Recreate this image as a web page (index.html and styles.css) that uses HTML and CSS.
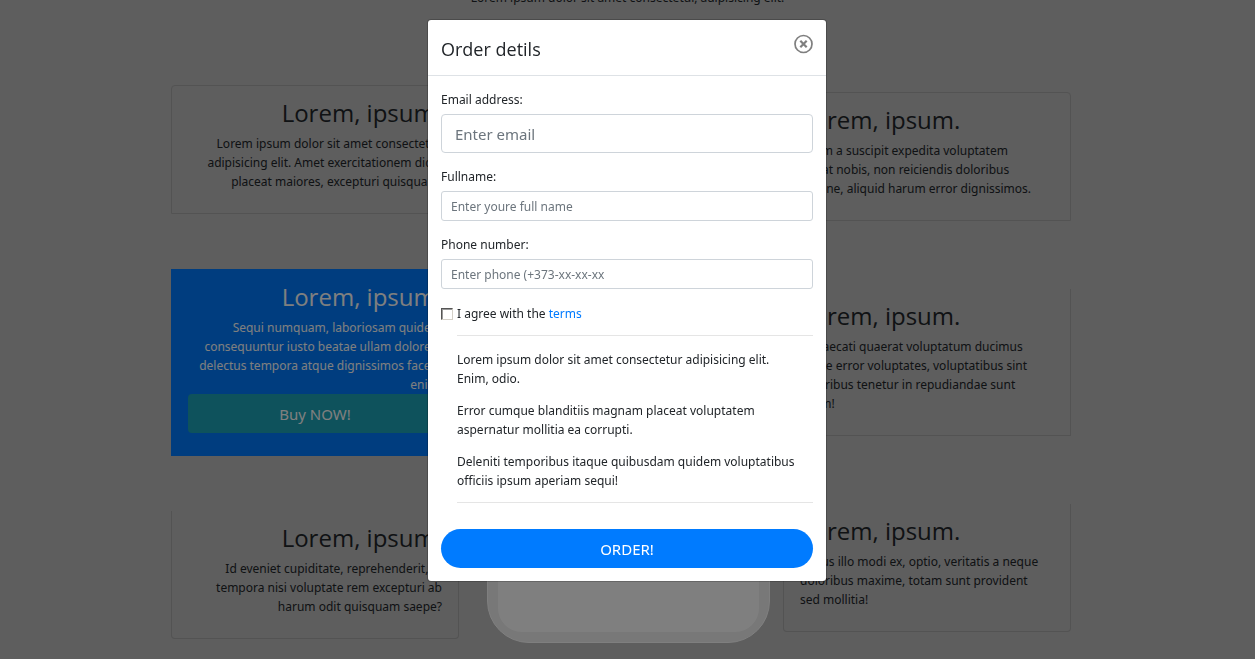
FILE: index.html
```html
<!DOCTYPE html>
<html lang="en">
<head>
<meta charset="utf-8">
<meta name="viewport" content="width=device-width, initial-scale=1">
<title>Order</title>
<link rel="stylesheet" href="styles.css">
</head>
<body>
<main class="page">
  <p class="lead">Lorem ipsum dolor sit amet consectetur, adipisicing elit.</p>
  <section class="features">
    <div class="column column-left">
      <article class="card card-first">
        <h2>Lorem, ipsum.</h2>
        <p>Lorem ipsum dolor sit amet consectetur<br>adipisicing elit. Amet exercitationem dicta<br>placeat maiores, excepturi quisquam.</p>
      </article>
      <article class="card card-active">
        <h2>Lorem, ipsum.</h2>
        <p>Sequi numquam, laboriosam quidem<br>consequuntur iusto beatae ullam dolorem<br>delectus tempora atque dignissimos facere<br>enim!</p>
        <button class="buy" type="button">Buy NOW!</button>
      </article>
      <article class="card card-last">
        <h2>Lorem, ipsum.</h2>
        <p>Id eveniet cupiditate, reprehenderit, in<br>tempora nisi voluptate rem excepturi ab<br>harum odit quisquam saepe?</p>
      </article>
    </div>
    <div class="phone"><div class="screen"></div></div>
    <div class="column column-right">
      <article class="card card-first">
        <h2>Lorem, ipsum.</h2>
        <p>Ullam a suscipit expedita voluptatem<br>fugiat nobis, non reiciendis doloribus<br>ratione, aliquid harum error dignissimos.</p>
      </article>
      <article class="card card-middle">
        <h2>Lorem, ipsum.</h2>
        <p>Obcaecati quaerat voluptatum ducimus<br>atque error voluptates, voluptatibus sint<br>doloribus tenetur in repudiandae sunt<br>ullam!</p>
      </article>
      <article class="card card-last">
        <h2>Lorem, ipsum.</h2>
        <p>Minus illo modi ex, optio, veritatis a neque<br>doloribus maxime, totam sunt provident<br>sed mollitia!</p>
      </article>
    </div>
  </section>
</main>

<div class="backdrop">
  <div class="modal" role="dialog" aria-modal="true" aria-labelledby="order-title">
    <header class="modal-header">
      <h1 id="order-title">Order detils</h1>
      <button class="close" type="button" aria-label="Close">
        <svg viewBox="0 0 20 20" width="20" height="20" fill="none" stroke="#7f7f7f">
          <circle cx="9.5" cy="10" r="8.5" stroke-width="1.7"/>
          <path d="M6.3 6.8l6.4 6.4M12.7 6.8l-6.4 6.4" stroke-width="2.2"/>
        </svg>
      </button>
    </header>
    <form class="modal-body">
      <div class="field">
        <label for="email">Email address:</label>
        <input class="input-large" id="email" type="email" placeholder="Enter email">
      </div>
      <div class="field">
        <label for="name">Fullname:</label>
        <input id="name" type="text" placeholder="Enter youre full name">
      </div>
      <div class="field">
        <label for="phone">Phone number:</label>
        <input id="phone" type="tel" placeholder="Enter phone (+373-xx-xx-xx">
      </div>
      <div class="agree">
        <input id="agree" type="checkbox">
        <label for="agree">I agree with the <a href="#terms">terms</a></label>
      </div>
      <div class="terms" id="terms">
        <p>Lorem ipsum dolor sit amet consectetur adipisicing elit.<br>Enim, odio.</p>
        <p>Error cumque blanditiis magnam placeat voluptatem<br>aspernatur mollitia ea corrupti.</p>
        <p>Deleniti temporibus itaque quibusdam quidem voluptatibus<br>officiis ipsum aperiam sequi!</p>
      </div>
      <button class="order" type="submit">ORDER!</button>
    </form>
  </div>
</div>
</body>
</html>
```
FILE: styles.css
```css
* {
  box-sizing: border-box;
}

body {
  margin: 0;
  height: 100vh;
  overflow: hidden;
  background: #bcbcbc;
  color: #212529;
  font: 12px/19px "Noto Sans", "Open Sans", sans-serif;
}

h1, h2, p {
  margin: 0;
  font-weight: 400;
}

h1, h2 {
  font-family: "Open Sans", "Noto Sans", sans-serif;
}

button, input {
  font-family: inherit;
}

.lead {
  margin-top: -12px;
  text-align: center;
}

.features {
  display: grid;
  grid-template-columns: 288px 28px 283px 13px 288px;
  justify-content: center;
  padding-right: 13px;
  margin-top: 26px;
}

.column {
  display: flex;
  flex-direction: column;
}

.column-left {
  grid-column: 1;
  gap: 55px;
  padding-top: 52px;
  text-align: right;
}

.column-right {
  grid-column: 5;
  gap: 68px;
  padding-top: 59px;
}

.card {
  padding: 11px 16px 22px;
  border: 1px solid #a6a6a6;
  white-space: nowrap;
}

.card h2 {
  margin-bottom: 6px;
  font-size: 24px;
  line-height: 31px;
}

.card-first {
  border-radius: 4px 4px 0 0;
}

.card-middle {
  border-top: 0;
}

.card-last {
  border-top: 0;
  border-radius: 0 0 4px 4px;
}

.card-active {
  border-color: #007bff;
  background: #007bff;
  color: #fff;
}

.buy {
  display: block;
  width: 100%;
  height: 39px;
  padding: 0;
  border: 0;
  border-radius: 4px;
  background: #1ca4b8;
  color: #fff;
  font-size: 15px;
}

.phone {
  grid-column: 3;
  display: flex;
  align-self: start;
  height: 610px;
  padding: 10px;
  border: 1px solid #fff;
  border-radius: 42px;
  background: #f0f0f0;
}

.screen {
  flex: 1;
  border-radius: 24px;
  background: #fff;
}

.backdrop {
  position: fixed;
  inset: 0;
  padding: 19px 17px 19px 16px;
  background: rgba(0, 0, 0, .5);
}

.modal {
  max-width: 400px;
  margin: 0 auto;
  border: 1px solid rgba(0, 0, 0, .2);
  border-radius: 4px;
  background: #fff;
  background-clip: padding-box;
}

.modal-header {
  display: flex;
  align-items: flex-start;
  justify-content: space-between;
  padding: 14px 12px 11px 13px;
  border-bottom: 1px solid #dee2e6;
}

.modal-header h1 {
  font-size: 18px;
  line-height: 30px;
}

.close {
  display: flex;
  padding: 0;
  border: 0;
  background: none;
}

.modal-body {
  padding: 14px 13px 13px;
}

.field {
  display: flex;
  flex-direction: column;
  gap: 5px;
  margin-bottom: 14px;
}

.field input {
  width: 100%;
  height: 30px;
  padding: 0 9px;
  border: 1px solid #ced4da;
  border-radius: 3px;
  font-size: 12px;
}

.field .input-large {
  height: 39px;
  padding: 0 13px;
  border-radius: 4px;
  font-size: 15px;
}

.field input::placeholder {
  color: #6c757d;
}

.agree {
  display: flex;
  align-items: center;
  gap: 4px;
  line-height: 21px;
}

.agree input {
  appearance: none;
  width: 12px;
  height: 12px;
  margin: 0;
  border: 1px solid;
  border-color: #555 #d4d0c8 #d4d0c8 #555;
  box-shadow: inset 1px 1px #999;
}

.agree a {
  color: #007bff;
  text-decoration: none;
}

.terms {
  display: flex;
  flex-direction: column;
  gap: 13px;
  margin: 11px 0 26px 16px;
  padding: 14px 0 12px;
  border: solid #e5e5e5;
  border-width: 1px 0;
}

.order {
  display: block;
  width: 100%;
  height: 39px;
  padding: 0;
  border: 0;
  border-radius: 20px;
  background: #007bff;
  color: #fff;
  font-size: 15px;
}
```
